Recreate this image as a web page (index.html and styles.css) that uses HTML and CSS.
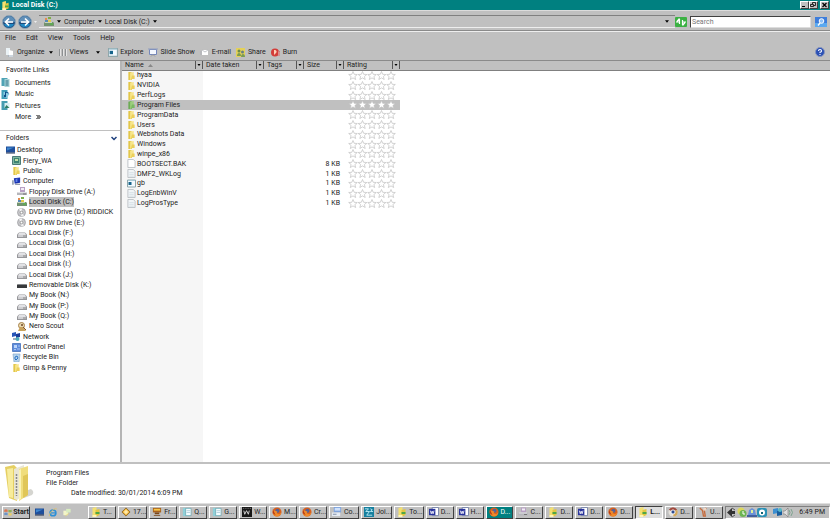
FILE: index.html
```html
<!DOCTYPE html>
<html lang="en">
<head>
<meta charset="utf-8">
<title>Local Disk (C:)</title>
<link rel="stylesheet" href="styles.css">
</head>
<body>
<svg class="sprite" aria-hidden="true">
  <symbol id="folder" viewBox="0 0 9 10"><path d="M1 1h3l1 1v8H1z" fill="#e3c74a"/><path d="M3 2l4-1v7l-4 2z" fill="#f7e58a"/><path d="M5 5h3v4H4z" fill="#ecd05a"/></symbol>
  <symbol id="folder-green" viewBox="0 0 9 10"><path d="M1 2l3-1 1 1v8H1z" fill="#6cab55"/><path d="M3 2l4-1v7l-4 2z" fill="#9ccf7c"/><path d="M5 5h3v4H4z" fill="#79b962"/></symbol>
  <symbol id="drivefolder" viewBox="0 0 9 10"><path d="M1 1l4-1v9l-4 1z" fill="#f3e070"/><path d="M4 3l4-1v6l-4 2z" fill="#e2c640"/><path d="M4 5h4v2H4z" fill="#4fa845"/><path d="M1 8h4v2H1z" fill="#fff6b8"/></symbol>
  <symbol id="page" viewBox="0 0 9 10"><path d="M.5.5h6l2 2v7h-8z" fill="#fff" stroke="#b9c0c4"/></symbol>
  <symbol id="log" viewBox="0 0 9 10"><path d="M.5.5h6l2 2v7h-8z" fill="#f1f5f7" stroke="#b9c0c4"/><path d="M2 4h5M2 6h5M2 8h5" stroke="#cbd7df" stroke-width=".7"/></symbol>
  <symbol id="window" viewBox="0 0 9 8"><path d="M.5.5h8v7h-8z" fill="#f2faff" stroke="#8fa7ab"/><path d="M1.500 2.500h3v3h-3z" fill="#17648b"/><path d="M1 1h7" stroke="#a9cbd8"/></symbol>
  <symbol id="documents" viewBox="0 0 8 9"><path d="M0 0h6v8H0z" fill="#4fa3b5"/><path d="M3 1h5v8H3z" fill="#a9d5d8"/><path d="M4 3h3M4 5h3M4 7h3" stroke="#2b6c86"/></symbol>
  <symbol id="music" viewBox="0 0 8 9"><path d="M0 0h6v9H0z" fill="#3f9fba"/><path d="M2 2h4l2 2-3 4-3-1z" fill="#8ccde4"/><path d="M4 6V2l3 1" fill="none" stroke="#0e4d87"/><circle cx="3.500" cy="6" r="1.200" fill="#0e4d87"/></symbol>
  <symbol id="pictures" viewBox="0 0 8 9"><path d="M0 0h6v9H0z" fill="#469cb0"/><path d="M3 2h5v5H3z" fill="#d9eef3"/><path d="M3 7l2-3 3 3z" fill="#2d7d63"/></symbol>
  <symbol id="desktop" viewBox="0 0 9 8"><path d="M0 0h9v6H0z" fill="#1f4e9b"/><path d="M1 1h7L1 4z" fill="#3d86cf"/><path d="M0 6h9v1H0z" fill="#1b2a50"/></symbol>
  <symbol id="user" viewBox="0 0 9 9"><path d="M.5.5h8v8h-8z" fill="#7fb7a0" stroke="#4b7b78"/><path d="M2 2h5v5H2z" fill="#3e8371"/><path d="M3 3h3v2H3z" fill="#bfe0a5"/></symbol>
  <symbol id="computer" viewBox="0 0 10 9"><path d="M0 3h2v5H0z" fill="#9ba6b8"/><path d="M2 1l7-1v6L3 7z" fill="#1c35b1"/><path d="M4 2l2-1v4H4z" fill="#5e82e8"/><path d="M4 7h5v1H3z" fill="#777e90"/></symbol>
  <symbol id="floppy" viewBox="0 0 10 9"><path d="M3 0h5v5H3z" fill="#b8a0c4"/><path d="M4 1h3v2H4z" fill="#f2eef5"/><path d="M1 5h8l1 1v2H0V6z" fill="#b6b6bb"/><path d="M1 5h8v1H1z" fill="#e0e0e4"/><path d="M6 7h3" stroke="#777"/></symbol>
  <symbol id="sysdisk" viewBox="0 0 10 9"><path d="M1 1h2v2H1z" fill="#e28a51"/><path d="M4 0h3v2H4z" fill="#7fae49"/><path d="M1 3h3v2H1z" fill="#5789b8"/><path d="M4 3h3v2H4z" fill="#e5cb4b"/><path d="M1 5h8l1 1v3H0V6z" fill="#73936f"/><path d="M1 5h7v1H1z" fill="#c8d3bd"/><path d="M6 7h3" stroke="#4fbf3f"/></symbol>
  <symbol id="dvd" viewBox="0 0 10 9"><circle cx="4.500" cy="4.500" r="4" fill="#c6c6c9" stroke="#9a9a9e" stroke-width=".7"/><path d="M4.500 4.500L2 1.500A4 4 0 0 1 5 .6z" fill="#f7f7f7"/><path d="M4.500 4.500L7 7.500A4 4 0 0 1 4 8.300z" fill="#eee"/><circle cx="4.500" cy="4.500" r="1.300" fill="#fff" stroke="#777" stroke-width=".6"/></symbol>
  <symbol id="disk" viewBox="0 0 10 9"><path d="M2 3.500h6l2 2V9H0V5.500z" fill="#97979b"/><path d="M2 4h6l1 2H1z" fill="#e2e2e5"/><path d="M1 6h8v2H1z" fill="#cfcfd2"/><path d="M6 7h3" stroke="#777" stroke-width=".8"/></symbol>
  <symbol id="removable" viewBox="0 0 10 9"><path d="M1 4h8l1 1v3H0V5z" fill="#37393b"/><path d="M1 4h8v1H1z" fill="#85888b"/></symbol>
  <symbol id="scout" viewBox="0 0 10 9"><circle cx="4.500" cy="3.500" r="3" fill="#e9d8b0" stroke="#a7834a"/><path d="M1 9l2-4h3l3 4z" fill="#c9a35c"/><path d="M6 5l3 3" stroke="#83552d"/><path d="M4 2h2v2H4z" fill="#8d6b48"/></symbol>
  <symbol id="network" viewBox="0 0 9 9"><path d="M0 1l4-1v4L0 5z" fill="#2855b7"/><path d="M4 2l4-1v4L4 6z" fill="#1c3c97"/><path d="M1 6h4v2H1z" fill="#a1adbd"/><circle cx="5.500" cy="7" r="2" fill="#4ba9b8"/></symbol>
  <symbol id="control" viewBox="0 0 9 9"><path d="M.5.5h8v8h-8z" fill="#5c8bdc" stroke="#5a82c4"/><path d="M2 2h3v3H2z" fill="#b9d5fa"/><path d="M5 6h3M2 6.500h2M6 3h2" stroke="#a9c5f0"/></symbol>
  <symbol id="recycle" viewBox="0 0 9 9"><path d="M1 1h7L7 9H2z" fill="#b4d4ee" stroke="#84a8cc" stroke-width=".7"/><path d="M3 4l2-1 1 2-2 2-1-1z" fill="none" stroke="#2b72c4"/></symbol>
  <symbol id="star" viewBox="0 0 10 9"><path d="M5 .5l1.200 2.800 3.100.2-2.400 2 .8 3L5 6.900 2.300 8.500l.8-3-2.400-2 3.100-.2z"/></symbol>
  <symbol id="stars" viewBox="0 0 48 9"><use href="#star" x="0" width="10" height="9"/><use href="#star" x="9.500" width="10" height="9"/><use href="#star" x="19" width="10" height="9"/><use href="#star" x="28.500" width="10" height="9"/><use href="#star" x="38" width="10" height="9"/></symbol>
  <symbol id="organize" viewBox="0 0 10 9"><path d="M1 0h4v7H1z" fill="#eaf2f6"/><path d="M4 2l4 1v6H4z" fill="#fff"/><path d="M3 8h5" stroke="#9ab"/></symbol>
  <symbol id="views" viewBox="0 0 10 9"><path d="M1.500 1v7M4.500 1v7M7.500 1v7" stroke="#8c8f91"/><path d="M2.500 1v7M5.500 1v7M8.500 1v7" stroke="#e4e4e4"/></symbol>
  <symbol id="slides" viewBox="0 0 10 9"><path d="M1.500 1.500h7v5h-7z" fill="#f4f8ff" stroke="#7386ba"/><path d="M0 1h10" stroke="#909dc0"/><path d="M3 8.500l2-2 2 2" stroke="#999" fill="none"/></symbol>
  <symbol id="mail" viewBox="0 0 10 9"><path d="M2 2h6v5H2z" fill="#fff"/><path d="M2 2l3 2 3-2M0 4h2M0 6h2" stroke="#a9adb5" fill="none" stroke-width=".7"/></symbol>
  <symbol id="share" viewBox="0 0 10 9"><path d="M0 0h9v9H0z" fill="#e4d159"/><circle cx="3" cy="3" r="1.500" fill="#6b8b4b"/><circle cx="6.500" cy="4" r="1.500" fill="#668083"/><path d="M1 8c0-4 4-4 4 0zM5 9c0-4 4-4 4 0z" fill="#7b9b54"/></symbol>
  <symbol id="burn" viewBox="0 0 10 9"><circle cx="4" cy="4.500" r="4" fill="#d33d39"/><path d="M3 2c3 0 3 2 2 3l-2 2z" fill="#ffd0b8"/><path d="M7 3l2 1v4H7z" fill="#eee"/><path d="M8 3v5" stroke="#b33"/></symbol>
  <symbol id="firefox" viewBox="0 0 11 11"><circle cx="5.500" cy="5.500" r="5" fill="#d9601d"/><circle cx="6" cy="4" r="2.200" fill="#52629a"/><path d="M1 3l2 1 3 1-1 2 3 1 2-2c0 6-9 6-9 0z" fill="#ee8a2b"/><path d="M1 2l1 3 2 4-3-2z" fill="#b83812"/></symbol>
  <symbol id="chrome" viewBox="0 0 11 11"><circle cx="5.500" cy="5.500" r="5" fill="#e5e2dc"/><path d="M5.500 5.500L1 3a5 5 0 0 1 9 0z" fill="#a04a3f"/><path d="M5.500 5.500L10 3a5 5 0 0 1-4 7.500z" fill="#d3a95b"/><circle cx="5.500" cy="5.500" r="2.300" fill="#2c4b91" stroke="#fff"/></symbol>
  <symbol id="word" viewBox="0 0 11 11"><path d="M3.500.5h7v9h-7z" fill="#fff" stroke="#7380a5"/><path d="M0 2h7v7H0z" fill="#28339c"/><path d="M1.500 4l1 3.500 1-3 1 3 1-3.500" fill="none" stroke="#fff" stroke-width=".9"/></symbol>
  <symbol id="notepad" viewBox="0 0 11 11"><path d="M1 1h8v9H1z" fill="#8fd0d9"/><path d="M4 1.500h6v8H4z" fill="#f3fdff" stroke="#5b9da8" stroke-width=".7"/><path d="M5 4h4M5 6h4" stroke="#9bc" stroke-width=".7"/></symbol>
  <symbol id="puzzle" viewBox="0 0 11 11"><path d="M5.500 1l4.500 4.500L5.500 10 1 5.500z" fill="#f2b942" stroke="#8d6727"/><path d="M5.500 3L8 5.500 5.500 8 3 5.500z" fill="#ffe9a7"/></symbol>
  <symbol id="cup" viewBox="0 0 11 11"><path d="M1 1h9v5H1z" fill="#a9621c"/><path d="M2 2h7v2H2z" fill="#f8c74a"/><path d="M3 6h5v2H3zM2 9h7v1H2z" fill="#7a4517"/></symbol>
  <symbol id="film" viewBox="0 0 11 11"><path d="M0 0h11v11H0z" fill="#171717"/><path d="M2 4l1 4 2-4 2 4 1-4" fill="none" stroke="#ddd"/><path d="M1 1.500h9" stroke="#888" stroke-dasharray="1 1"/></symbol>
  <symbol id="panel" viewBox="0 0 11 11"><path d="M2 0h8v6H2z" fill="#7fa3dc"/><path d="M3 1h6v3H3z" fill="#cfe1fa"/><path d="M0 6h9v4H0z" fill="#e5ebf3"/><path d="M1 8h4" stroke="#7c8ba5"/></symbol>
  <symbol id="join" viewBox="0 0 11 11"><path d="M0 0h11v11H0z" fill="#167f9e"/><path d="M1 2h4L2 5h4L3 9h6M7 2l2 1-2 2h3" fill="none" stroke="#bfeefa"/></symbol>
  <symbol id="tool" viewBox="0 0 11 11"><path d="M2 1l3 3 1 6h2L7 4l2-3" fill="none" stroke="#c66b3d" stroke-width="1.500"/><path d="M6 1h3v3H6z" fill="#f0d5c3"/></symbol>
  <symbol id="ie" viewBox="0 0 11 11"><circle cx="5.500" cy="6" r="3.500" fill="none" stroke="#2e8fd6" stroke-width="2"/><path d="M3 6h6" stroke="#2e8fd6" stroke-width="1.500"/><path d="M1 10C1 5 7 0 10 1" fill="none" stroke="#e5c25c"/></symbol>
  <symbol id="flag" viewBox="0 0 11 11"><path d="M1 2q2-1 4 0v3q-2-1-4 0z" fill="#dd7650"/><path d="M6 2q2 1 4 0v3q-2 1-4 0z" fill="#8eaf5b"/><path d="M1 6q2-1 4 0v3q-2-1-4 0z" fill="#6d94c6"/><path d="M6 6q2 1 4 0v3q-2 1-4 0z" fill="#e9cd66"/></symbol>
  <symbol id="down" viewBox="0 0 5 3"><path d="M0 0h5L2.500 3z" fill="#000"/></symbol>
</svg>

<header class="titlebar">
  <svg class="i9"><use href="#drivefolder"/></svg>
  <h1>Local Disk (C:)</h1>
  <div class="winbtns">
    <button aria-label="Minimize"><svg viewBox="0 0 7 6"><path d="M1 4.500h3" stroke="#000"/></svg></button>
    <button aria-label="Restore"><svg viewBox="0 0 7 6"><path d="M2.500 2V.5h3v3H4M.5 2.500h3v2h-3z" fill="none" stroke="#000" stroke-width=".8"/></svg></button>
    <button class="close" aria-label="Close"><svg viewBox="0 0 7 6"><path d="M1.500 1l4 4M5.500 1l-4 4" stroke="#000" stroke-width="1.200"/></svg></button>
  </div>
</header>

<div class="addressbar">
  <div class="navbtns">
    <button aria-label="Back"><svg viewBox="0 0 14 14"><circle cx="7" cy="7" r="6.500" fill="#1c4a7c" stroke="#8fa5b8"/><path d="M1 7a6 6 0 0 1 12 0q-6 2-12 0" fill="#5f8fb8"/><path d="M2 9a5.500 5.500 0 0 0 10 0" fill="#2088c4"/><path d="M11 7H4M7 3.500L3.500 7 7 10.500" fill="none" stroke="#fff" stroke-width="1.700"/></svg></button>
    <button aria-label="Forward"><svg viewBox="0 0 14 14"><circle cx="7" cy="7" r="6.500" fill="#1c4a7c" stroke="#8fa5b8"/><path d="M1 7a6 6 0 0 1 12 0q-6 2-12 0" fill="#5f8fb8"/><path d="M2 9a5.500 5.500 0 0 0 10 0" fill="#2088c4"/><path d="M3 7h7M7 3.500l3.500 3.500L7 10.500" fill="none" stroke="#fff" stroke-width="1.700"/></svg></button>
    <svg class="hist" viewBox="0 0 5 3"><path d="M0 0h5L2.500 3z" fill="#eee"/></svg>
  </div>
  <nav class="crumbs" aria-label="Address">
    <svg class="i10"><use href="#sysdisk"/></svg>
    <svg class="arrow"><use href="#down"/></svg>
    <a href="#computer-root">Computer</a>
    <svg class="arrow"><use href="#down"/></svg>
    <a href="#c">Local Disk (C:)</a>
    <svg class="arrow"><use href="#down"/></svg>
    <button class="recent" aria-label="Previous locations"><svg class="arrow"><use href="#down"/></svg></button>
  </nav>
  <button class="refresh" aria-label="Refresh"><svg viewBox="0 0 12 10"><rect width="12" height="10" rx="1" fill="#3bb143"/><path d="M4.500 2v5M2 4.500l2.500-3M7.500 8V3M10 5.500l-2.500 3M1 5h3M8 5h3" fill="none" stroke="#fff" stroke-width="1.200"/></svg></button>
  <input class="search" type="search" placeholder="Search" aria-label="Search">
  <button class="go" aria-label="Start search"><svg viewBox="0 0 12 10"><rect width="12" height="10" fill="#3d7ddb"/><path d="M0 6h12v4H0z" fill="#5ba9f0"/><circle cx="6.500" cy="4" r="2.300" fill="#8fc1f7" stroke="#fff"/><path d="M5 6L3 8.500" stroke="#fff" stroke-width="1.300"/></svg></button>
</div>

<nav class="menubar" aria-label="Menu">
  <button>File</button><button>Edit</button><button>View</button><button>Tools</button><button>Help</button>
</nav>

<div class="toolbar">
  <button><svg class="i10"><use href="#organize"/></svg>Organize <svg class="arrow"><use href="#down"/></svg></button>
  <button><svg class="i10"><use href="#views"/></svg>Views <svg class="arrow far"><use href="#down"/></svg></button>
  <button><svg class="i10"><use href="#window"/></svg>Explore</button>
  <button><svg class="i10"><use href="#slides"/></svg>Slide Show</button>
  <button><svg class="i10"><use href="#mail"/></svg>E-mail</button>
  <button><svg class="i10"><use href="#share"/></svg>Share</button>
  <button><svg class="i10"><use href="#burn"/></svg>Burn</button>
  <button class="help" aria-label="Help"><svg viewBox="0 0 10 10"><circle cx="5" cy="5" r="4.500" fill="#2b50b4" stroke="#8795bd"/><path d="M3.500 4q0-1.500 1.500-1.500T6.500 4Q6.500 5 5 5.300V6M5 7v1" fill="none" stroke="#fff" stroke-width="1.100"/></svg></button>
</div>

<main>
  <aside>
    <section class="favs">
      <h2>Favorite Links</h2>
      <ul>
        <li><svg class="i9"><use href="#documents"/></svg><a href="#docs">Documents</a></li>
        <li><svg class="i9"><use href="#music"/></svg><a href="#mus">Music</a></li>
        <li><svg class="i9"><use href="#pictures"/></svg><a href="#pics">Pictures</a></li>
        <li><span class="i9"></span><a href="#more">More</a><svg class="more" viewBox="0 0 5 4"><path d="M.5 0l2 2-2 2M2.500 0l2 2-2 2" fill="none" stroke="#000"/></svg></li>
      </ul>
    </section>
    <section class="folders">
      <h2>Folders <svg class="chev" viewBox="0 0 6 5"><path d="M.5 1L3 3.500 5.500 1" fill="none" stroke="#1d3f7d" stroke-width="1.500"/></svg></h2>
      <ul class="tree">
        <li class="l0"><svg class="i9"><use href="#desktop"/></svg><span>Desktop</span></li>
        <li class="l1"><svg class="i9"><use href="#user"/></svg><span>Fiery_WA</span></li>
        <li class="l1"><svg class="i9"><use href="#folder"/></svg><span>Public</span></li>
        <li class="l1"><svg class="i9"><use href="#computer"/></svg><span>Computer</span></li>
        <li class="l2"><svg class="i10"><use href="#floppy"/></svg><span>Floppy Disk Drive (A:)</span></li>
        <li class="l2"><svg class="i10"><use href="#sysdisk"/></svg><span class="sel">Local Disk (C:)</span></li>
        <li class="l2"><svg class="i10"><use href="#dvd"/></svg><span>DVD RW Drive (D:) RIDDICK</span></li>
        <li class="l2"><svg class="i10"><use href="#dvd"/></svg><span>DVD RW Drive (E:)</span></li>
        <li class="l2"><svg class="i10"><use href="#disk"/></svg><span>Local Disk (F:)</span></li>
        <li class="l2"><svg class="i10"><use href="#disk"/></svg><span>Local Disk (G:)</span></li>
        <li class="l2"><svg class="i10"><use href="#disk"/></svg><span>Local Disk (H:)</span></li>
        <li class="l2"><svg class="i10"><use href="#disk"/></svg><span>Local Disk (I:)</span></li>
        <li class="l2"><svg class="i10"><use href="#disk"/></svg><span>Local Disk (J:)</span></li>
        <li class="l2"><svg class="i10"><use href="#removable"/></svg><span>Removable Disk (K:)</span></li>
        <li class="l2"><svg class="i10"><use href="#disk"/></svg><span>My Book (N:)</span></li>
        <li class="l2"><svg class="i10"><use href="#disk"/></svg><span>My Book (P:)</span></li>
        <li class="l2"><svg class="i10"><use href="#disk"/></svg><span>My Book (Q:)</span></li>
        <li class="l2"><svg class="i10"><use href="#scout"/></svg><span>Nero Scout</span></li>
        <li class="l1"><svg class="i9"><use href="#network"/></svg><span>Network</span></li>
        <li class="l1"><svg class="i9"><use href="#control"/></svg><span>Control Panel</span></li>
        <li class="l1"><svg class="i9"><use href="#recycle"/></svg><span>Recycle Bin</span></li>
        <li class="l1"><svg class="i9"><use href="#folder"/></svg><span>Gimp &amp; Penny</span></li>
      </ul>
    </section>
  </aside>

  <section class="files">
    <table>
      <colgroup><col class="c-name"><col class="c-date"><col class="c-tags"><col class="c-size"><col class="c-rate"><col></colgroup>
      <thead>
        <tr>
          <th><div>Name <svg class="sort" viewBox="0 0 5 3"><path d="M0 3h5L2.500 0z" fill="#888"/></svg><button aria-label="Filter name"><svg viewBox="0 0 5 3"><use href="#down"/></svg></button></div></th>
          <th><div>Date taken<button aria-label="Filter date"><svg viewBox="0 0 5 3"><use href="#down"/></svg></button></div></th>
          <th><div>Tags<button aria-label="Filter tags"><svg viewBox="0 0 5 3"><use href="#down"/></svg></button></div></th>
          <th><div>Size<button aria-label="Filter size"><svg viewBox="0 0 5 3"><use href="#down"/></svg></button></div></th>
          <th><div>Rating<button aria-label="Filter rating"><svg viewBox="0 0 5 3"><use href="#down"/></svg></button></div></th>
          <td></td>
        </tr>
      </thead>
      <tbody>
        <tr><td><div><svg class="i9"><use href="#folder"/></svg>hyaa</div></td><td></td><td></td><td></td><td><svg class="stars"><use href="#stars"/></svg></td><td></td></tr>
        <tr><td><div><svg class="i9"><use href="#folder"/></svg>NVIDIA</div></td><td></td><td></td><td></td><td><svg class="stars"><use href="#stars"/></svg></td><td></td></tr>
        <tr><td><div><svg class="i9"><use href="#folder"/></svg>PerfLogs</div></td><td></td><td></td><td></td><td><svg class="stars"><use href="#stars"/></svg></td><td></td></tr>
        <tr class="selected"><td><div><svg class="i9"><use href="#folder-green"/></svg>Program Files</div></td><td></td><td></td><td></td><td><svg class="stars"><use href="#stars"/></svg></td><td></td></tr>
        <tr><td><div><svg class="i9"><use href="#folder"/></svg>ProgramData</div></td><td></td><td></td><td></td><td><svg class="stars"><use href="#stars"/></svg></td><td></td></tr>
        <tr><td><div><svg class="i9"><use href="#folder"/></svg>Users</div></td><td></td><td></td><td></td><td><svg class="stars"><use href="#stars"/></svg></td><td></td></tr>
        <tr><td><div><svg class="i9"><use href="#folder"/></svg>Webshots Data</div></td><td></td><td></td><td></td><td><svg class="stars"><use href="#stars"/></svg></td><td></td></tr>
        <tr><td><div><svg class="i9"><use href="#folder"/></svg>Windows</div></td><td></td><td></td><td></td><td><svg class="stars"><use href="#stars"/></svg></td><td></td></tr>
        <tr><td><div><svg class="i9"><use href="#folder"/></svg>winpe_x86</div></td><td></td><td></td><td></td><td><svg class="stars"><use href="#stars"/></svg></td><td></td></tr>
        <tr><td><div><svg class="i9"><use href="#page"/></svg>BOOTSECT.BAK</div></td><td></td><td></td><td>8 KB</td><td><svg class="stars"><use href="#stars"/></svg></td><td></td></tr>
        <tr><td><div><svg class="i9"><use href="#log"/></svg>DMF2_WKLog</div></td><td></td><td></td><td>1 KB</td><td><svg class="stars"><use href="#stars"/></svg></td><td></td></tr>
        <tr><td><div><svg class="i9"><use href="#window"/></svg>gb</div></td><td></td><td></td><td>1 KB</td><td><svg class="stars"><use href="#stars"/></svg></td><td></td></tr>
        <tr><td><div><svg class="i9"><use href="#log"/></svg>LogEnbWinV</div></td><td></td><td></td><td>1 KB</td><td><svg class="stars"><use href="#stars"/></svg></td><td></td></tr>
        <tr><td><div><svg class="i9"><use href="#log"/></svg>LogProsType</div></td><td></td><td></td><td>1 KB</td><td><svg class="stars"><use href="#stars"/></svg></td><td></td></tr>
      </tbody>
    </table>
  </section>
</main>

<section class="details">
  <svg class="bigfolder" viewBox="0 0 32 38"><path d="M20 34l8-3q3-3-1-6l-6 2z" fill="#d5d5d0"/><path d="M1 3l9-2 3 3v33L5 34z" fill="#e5cf62"/><path d="M3 5l6-1v30l-4-1z" fill="#f7ec9c"/><path d="M10 5l10-4v30l-7 5-3-1z" fill="#e9e6d4"/><path d="M12.500 10v22" stroke="#888" stroke-width="1.500" stroke-dasharray="2 1"/><path d="M15 5l9-3v29l-9 6z" fill="#f0dd7c"/><path d="M19 12l5-2v21l-5 3z" fill="#e0c658"/><path d="M15 6l2-1v30l-2 1z" fill="#faf2b3"/></svg>
  <div class="info">
    <strong>Program Files</strong>
    <span>File Folder</span>
    <span class="mod">Date modified: 30/01/2014 6:09 PM</span>
  </div>
</section>

<footer class="taskbar">
  <button class="start"><svg class="i10"><use href="#flag"/></svg>Start</button>
  <div class="quick">
    <button aria-label="Show desktop"><svg class="i9"><use href="#desktop"/></svg></button>
    <button aria-label="Internet Explorer"><svg class="i10"><use href="#ie"/></svg></button>
    <button aria-label="Switch windows"><svg class="i10" viewBox="0 0 10 10"><path d="M1 3h5v5H1z" fill="#f3f5c8"/><path d="M4 1h5v4H4z" fill="#d8edc0"/><path d="M3 9l4-3" stroke="#e8d87d"/></svg></button>
  </div>
  <div class="tasks">
    <button><svg><use href="#drivefolder"/></svg>T...</button>
    <button><svg><use href="#puzzle"/></svg>17...</button>
    <button><svg><use href="#cup"/></svg>Fr...</button>
    <button><svg><use href="#notepad"/></svg>Q...</button>
    <button><svg><use href="#notepad"/></svg>G...</button>
    <button><svg><use href="#film"/></svg>W...</button>
    <button><svg><use href="#firefox"/></svg>M...</button>
    <button><svg><use href="#firefox"/></svg>Cr...</button>
    <button><svg><use href="#panel"/></svg>Co...</button>
    <button><svg><use href="#join"/></svg>Joi...</button>
    <button><svg><use href="#drivefolder"/></svg>To...</button>
    <button><svg><use href="#word"/></svg>D...</button>
    <button><svg><use href="#word"/></svg>H...</button>
    <button class="alert"><svg><use href="#firefox"/></svg>D...</button>
    <button><svg><use href="#floppy"/></svg>C...</button>
    <button><svg><use href="#drivefolder"/></svg>D...</button>
    <button><svg><use href="#word"/></svg>D...</button>
    <button><svg><use href="#firefox"/></svg>D...</button>
    <button class="current"><svg><use href="#drivefolder"/></svg>L...</button>
    <button><svg><use href="#chrome"/></svg>D...</button>
    <button><svg><use href="#tool"/></svg>U...</button>
  </div>
  <div class="tray">
    <svg viewBox="0 0 10 11"><path d="M0 5.500L5 1v3h3v3H5v3z" fill="#333"/><path d="M5 1l3 2M5 10l3-2" stroke="#555"/></svg>
    <svg viewBox="0 0 10 11"><circle cx="4" cy="4" r="3.500" fill="#dcd75b"/><circle cx="6" cy="6.500" r="3.500" fill="#6cb553"/><path d="M6 4v3h2" fill="none" stroke="#fff"/></svg>
    <svg viewBox="0 0 10 11"><path d="M1 8l1-5 3-2 3 2 1 5z" fill="#6b92d8"/><path d="M0 8h10v2H0z" fill="#43609f"/><path d="M4 3h2v3H4z" fill="#dff09b"/></svg>
    <svg viewBox="0 0 10 11"><rect y="1" width="10" height="9" rx="2" fill="#2c91b6"/><circle cx="5" cy="5.500" r="3" fill="#fff"/><path d="M4 5h2v2H4z" fill="#167"/></svg>
    <svg class="gap" viewBox="0 0 10 11"><path d="M0 2l5-1v5L0 7z" fill="#3c8fd0"/><path d="M4 4l5-1v5L4 9z" fill="#185d9e"/><circle cx="7" cy="3" r="2" fill="#55b8c5"/></svg>
    <svg viewBox="0 0 10 11"><path d="M0 4h2l3-3v9L2 7H0z" fill="#dedede" stroke="#777" stroke-width=".6"/><path d="M6 3q2 2.500 0 5M8 2q3 3.500 0 7" fill="none" stroke="#7ca48e"/></svg>
    <time>6:49 PM</time>
  </div>
</footer>
</body>
</html>
```
FILE: styles.css
```css
* { box-sizing: border-box; }

body {
  margin: 0;
  height: 100vh;
  display: flex;
  flex-direction: column;
  overflow: hidden;
  background: #c0c0c0;
  color: #222;
  font: 7px/10px Roboto, "Liberation Sans", sans-serif;
}

h1, h2, ul { margin: 0; padding: 0; font: inherit; list-style: none; }
a { color: inherit; text-decoration: none; }
svg { display: block; flex: none; }
button {
  display: flex;
  align-items: center;
  justify-content: center;
  padding: 0;
  border: 0;
  background: none;
  color: inherit;
  font: inherit;
  white-space: nowrap;
}

.sprite { position: absolute; width: 0; height: 0; }
.i9 { width: 9px; height: 9px; flex: none; }
.i10 { width: 10px; height: 9px; }
.arrow { width: 4px; height: 3px; }

/* Title bar */
.titlebar {
  flex: none;
  height: 10px;
  display: flex;
  align-items: center;
  gap: 2px;
  padding: 0 1px;
  background: #008080;
  color: #fff;
}
.titlebar h1 { flex: 1; font-weight: bold; }
.winbtns { display: flex; }
.winbtns button {
  width: 9px;
  height: 8px;
  background: #c0c0c0;
  border: 1px solid;
  border-color: #fff #404040 #404040 #fff;
}
.winbtns .close { margin-left: 2px; }
.winbtns svg { width: 7px; height: 6px; }

/* Address bar */
.addressbar {
  flex: none;
  height: 22px;
  display: flex;
  align-items: center;
  padding: 4px 3px 3px 2px;
  border-top: 1px solid #dcdcdc;
  border-bottom: 1px solid #eee;
  box-shadow: inset 0 -1px #8a8a8a;
}
.navbtns { display: flex; align-items: center; gap: 2px; width: 37px; }
.navbtns button svg { width: 14px; height: 14px; }
.hist { width: 3px; height: 2px; }
.crumbs {
  flex: 1;
  height: 13px;
  display: flex;
  align-items: center;
  gap: 3px;
  padding-left: 5px;
  border-top: 1px solid #808080;
  border-bottom: 1px solid #eee;
}
.recent { margin-left: auto; margin-right: 6px; }
.refresh svg, .go svg { width: 12px; height: 10px; }
.search {
  width: 121px;
  height: 12px;
  margin: 0 4px 0 3px;
  padding: 0 1px;
  border: 1px solid;
  border-color: #404040 #ddd #ddd #404040;
  border-radius: 0;
  background: #fff;
  font: inherit;
  appearance: none;
}
.search::placeholder { color: #777; }

/* Menu and toolbar */
.menubar { flex: none; height: 12px; display: flex; gap: 10px; padding-left: 5px; }
.toolbar {
  flex: none;
  height: 17px;
  display: flex;
  align-items: center;
  gap: 5px;
  padding: 0 5px;
  border-bottom: 1px solid #8a8a8a;
}
.toolbar button { gap: 2px; }
.toolbar .arrow { margin-left: 2px; }
.toolbar .far { margin-left: 6px; margin-right: 3px; }
.toolbar .help { margin-left: auto; }
.help svg { width: 10px; height: 10px; }

/* Body panes */
main { flex: 1; min-height: 0; display: flex; background: #fff; }
aside { flex: none; width: 122px; border-right: 2px solid #b5b5b5; }
.favs { height: 70px; padding-top: 4px; border-bottom: 1px solid #c0c0c0; }
h2 { padding-left: 6px; }
.favs ul { display: grid; grid-auto-rows: 1fr; height: 48px; padding: 2px 0 0 1px; }
.favs li { display: flex; align-items: center; gap: 5px; }
.more { width: 5px; height: 4px; }
.folders h2 {
  display: flex;
  align-items: center;
  justify-content: space-between;
  padding: 2px 3px 0 6px;
}
.chev { width: 6px; height: 5px; }
.tree { display: grid; grid-auto-rows: 1fr; height: 228px; margin-top: 2px; }
.tree li { display: flex; align-items: center; gap: 2px; }
.l0 { padding-left: 6px; }
.l1 { padding-left: 12px; }
.l2 { padding-left: 17px; }
.sel { background: #c0c0c0; }

.files { flex: 1; background: linear-gradient(90deg, #f6f6f6 81px, #fff 81px); }
table {
  width: 100%;
  height: 147px;
  table-layout: fixed;
  border-collapse: collapse;
  line-height: 8px;
}
.c-name { width: 81px; }
.c-date { width: 61px; }
.c-tags, .c-size { width: 40px; }
.c-rate { width: 56px; }
td, th { padding: 0; font-weight: normal; text-align: left; white-space: nowrap; }
thead th, thead td { height: 9px; background: #c0c0c0; border-bottom: 1px solid #808080; }
th div { display: flex; align-items: center; padding-left: 3px; }
th button {
  margin-left: auto;
  width: 8px;
  height: 8px;
  border-left: 1px solid #555;
  border-right: 1px solid #555;
}
th button svg { width: 4px; height: 2px; }
.sort { width: 5px; height: 3px; margin-left: 4px; }
td div { display: flex; align-items: center; gap: 1px; padding-left: 5px; }
td:nth-child(4) { text-align: right; padding-right: 4px; }
.stars { width: 48px; height: 9px; margin-left: 4px; fill: #fff; stroke: #c0c0c0; stroke-width: .7; }
.selected td:not(:last-child) { background: #c0c0c0; }

/* Details pane */
.details {
  flex: none;
  height: 41px;
  display: flex;
  gap: 10px;
  padding-left: 4px;
  border-top: 2px solid #c0c0c0;
  background: #fff;
}
.bigfolder { width: 32px; height: 38px; }
.info { display: flex; flex-direction: column; padding-top: 4px; }
.info strong { font-weight: normal; }
.mod { padding-left: 25px; }

/* Taskbar */
.taskbar {
  flex: none;
  height: 16px;
  display: flex;
  align-items: center;
  padding: 1px 0 0 2px;
  border-top: 1px solid #dfdfdf;
}
.taskbar button, .tray { height: 13px; }
.start, .tasks button {
  border: 1px solid;
  border-color: #fff #404040 #404040 #fff;
}
.start { width: 28px; font-weight: bold; }
.quick { display: flex; gap: 4px; width: 58px; padding-left: 5px; }
.tasks { flex: 1; display: grid; grid-auto-flow: column; grid-auto-columns: 1fr; gap: 2px; }
.tasks button { gap: 2px; padding-left: 2px; justify-content: flex-start; }
.tasks svg { width: 10px; height: 10px; }
.tasks .alert { background: #008080; color: #fff; }
.tasks .current {
  background: #dedede;
  border-color: #404040 #fff #fff #404040;
  font-weight: bold;
}
.tray {
  width: 105px;
  margin-left: 2px;
  display: flex;
  align-items: center;
  padding: 0 4px 0 1px;
  border: 1px solid;
  border-color: #808080 #fff #fff #808080;
}
.tray svg { width: 10px; height: 11px; }
.tray .gap { margin-left: 6px; }
.tray time { margin-left: auto; }
```
